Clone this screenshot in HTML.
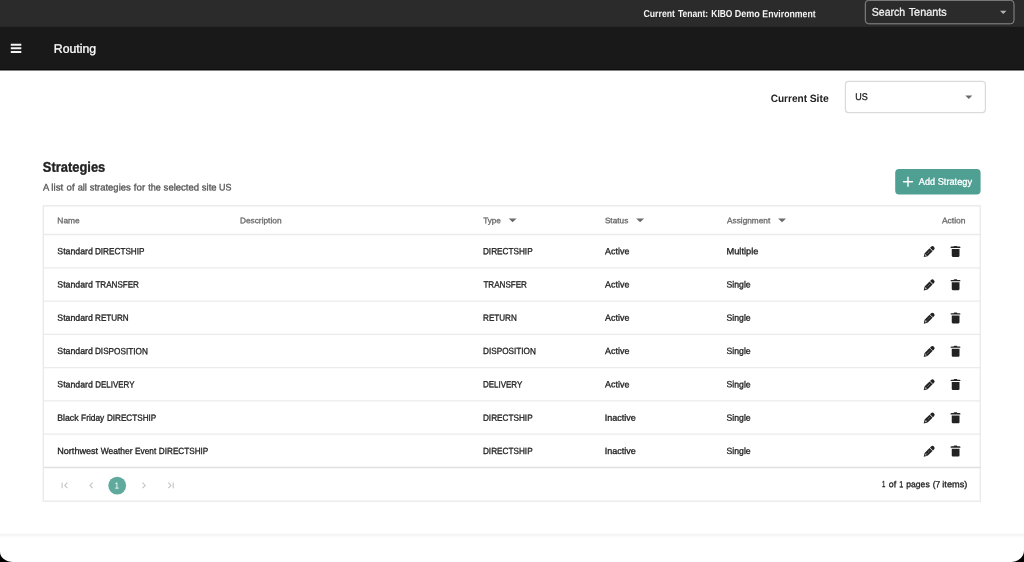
<!DOCTYPE html>
<html lang="en">
<head>
<meta charset="utf-8">
<title>Routing</title>
<style>
*{box-sizing:border-box;margin:0;padding:0}
html,body{width:1024px;height:562px;overflow:hidden;background:#000;font-family:"Liberation Sans",sans-serif;}
#app{will-change:transform;position:absolute;left:0;top:0;width:1024px;height:562px;background:#fff;overflow:hidden}
.abs{position:absolute;white-space:nowrap;line-height:1}
#topbar{position:absolute;left:0;top:0;width:1024px;height:27px;background:#2b2b2b}
.tx{left:0;top:0;transform-origin:0 0}
.w{display:inline-block;width:0;transform-origin:0 0;white-space:nowrap}
</style>
</head>
<body>
<div id="app">
  <div id="topbar"></div>
  <svg class="abs" style="left:0;top:0" width="1024" height="562" viewBox="0 0 1024 562" fill="none">
    <rect x="0" y="26.8" width="1024" height="43.5" fill="#191919"/>
    <rect x="0" y="69" width="1024" height="1.3" fill="#0d0d0d"/>
    <rect x="865.3" y="0.3" width="148.7" height="23.5" rx="3.5" stroke="#8c8c8c" stroke-width="1"/>
    <path d="M10.8 43.8h10.5v2h-10.5zM10.8 47.3h10.5v2h-10.5zM10.8 50.9h10.5v2.1h-10.5z" fill="#f4f4f4"/>
    <rect x="845.4" y="81.4" width="140" height="31.2" rx="3" stroke="#dadada" stroke-width="1.2" fill="#fff"/>
    <rect x="895.2" y="169.1" width="85.4" height="25.5" rx="4" fill="#4f9f93"/>
    <path d="M908 177.3v9M903.5 181.8h9" stroke="#fff" stroke-width="1.4" stroke-linecap="round"/>
    <circle cx="117.2" cy="485.6" r="8.9" fill="#5fa99d"/>
  </svg>

<svg class="abs" style="left:0;top:0" width="1024" height="562" viewBox="0 0 1024 562" fill="none">
<rect x="43.3" y="205.8" width="937" height="295.4" stroke="#e9e9e9" stroke-width="1.3"/>
<path d="M44 234.5H980" stroke="#ebebeb" stroke-width="1.3"/>
<path d="M44 267.78H980" stroke="#ebebeb" stroke-width="1.3"/>
<path d="M44 301.06H980" stroke="#ebebeb" stroke-width="1.3"/>
<path d="M44 334.34H980" stroke="#ebebeb" stroke-width="1.3"/>
<path d="M44 367.62H980" stroke="#ebebeb" stroke-width="1.3"/>
<path d="M44 400.9H980" stroke="#ebebeb" stroke-width="1.3"/>
<path d="M44 434.18H980" stroke="#ebebeb" stroke-width="1.3"/>
<path d="M44 467.5H980" stroke="#dfdfdf" stroke-width="1.7"/>
<path d="M508.7 218.4h7.9l-3.95 3.9z" fill="#6a6a6a"/>
<path d="M636.2 218.4h7.9l-3.95 3.9z" fill="#6a6a6a"/>
<path d="M778.1 218.4h7.9l-3.95 3.9z" fill="#6a6a6a"/>
<path d="M1000 10.7h6.5l-3.25 3.3z" fill="#b4b4b4"/>
<path d="M965.3 95.6h7l-3.5 3.4z" fill="#6a6a6a"/>
<g transform="translate(922,243.80)"><g transform="translate(1.7,13.3) rotate(-45)" fill="#222"><path d="M0 0L3.4 -2.1V2.1Z"/><path d="M3.4 -2.1H10.4V2.1H3.4Z"/><path d="M11 -2.1H12.5Q14.5 -2.1 14.5 0Q14.5 2.1 12.5 2.1H11Z"/><path d="M1.7 0L3.3 -1V1Z" fill="#bbb"/><path d="M4.3 0H9.6" stroke="#ccc" stroke-width="0.6" stroke-dasharray="1 0.8" fill="none"/></g></g>
<path transform="translate(949,243.80)" d="M1.6 3.6Q1.6 2.8 2.5 2.8H4.6Q4.9 2.1 5.6 2.1H7.4Q8.1 2.1 8.4 2.8H10.5Q11.4 2.8 11.4 3.6V4.2H1.6Z M2.75 5.2H10.5V12Q10.5 13.1 9.4 13.1H3.85Q2.75 13.1 2.75 12Z" fill="#222"/>
<g transform="translate(922,277.08)"><g transform="translate(1.7,13.3) rotate(-45)" fill="#222"><path d="M0 0L3.4 -2.1V2.1Z"/><path d="M3.4 -2.1H10.4V2.1H3.4Z"/><path d="M11 -2.1H12.5Q14.5 -2.1 14.5 0Q14.5 2.1 12.5 2.1H11Z"/><path d="M1.7 0L3.3 -1V1Z" fill="#bbb"/><path d="M4.3 0H9.6" stroke="#ccc" stroke-width="0.6" stroke-dasharray="1 0.8" fill="none"/></g></g>
<path transform="translate(949,277.08)" d="M1.6 3.6Q1.6 2.8 2.5 2.8H4.6Q4.9 2.1 5.6 2.1H7.4Q8.1 2.1 8.4 2.8H10.5Q11.4 2.8 11.4 3.6V4.2H1.6Z M2.75 5.2H10.5V12Q10.5 13.1 9.4 13.1H3.85Q2.75 13.1 2.75 12Z" fill="#222"/>
<g transform="translate(922,310.36)"><g transform="translate(1.7,13.3) rotate(-45)" fill="#222"><path d="M0 0L3.4 -2.1V2.1Z"/><path d="M3.4 -2.1H10.4V2.1H3.4Z"/><path d="M11 -2.1H12.5Q14.5 -2.1 14.5 0Q14.5 2.1 12.5 2.1H11Z"/><path d="M1.7 0L3.3 -1V1Z" fill="#bbb"/><path d="M4.3 0H9.6" stroke="#ccc" stroke-width="0.6" stroke-dasharray="1 0.8" fill="none"/></g></g>
<path transform="translate(949,310.36)" d="M1.6 3.6Q1.6 2.8 2.5 2.8H4.6Q4.9 2.1 5.6 2.1H7.4Q8.1 2.1 8.4 2.8H10.5Q11.4 2.8 11.4 3.6V4.2H1.6Z M2.75 5.2H10.5V12Q10.5 13.1 9.4 13.1H3.85Q2.75 13.1 2.75 12Z" fill="#222"/>
<g transform="translate(922,343.64)"><g transform="translate(1.7,13.3) rotate(-45)" fill="#222"><path d="M0 0L3.4 -2.1V2.1Z"/><path d="M3.4 -2.1H10.4V2.1H3.4Z"/><path d="M11 -2.1H12.5Q14.5 -2.1 14.5 0Q14.5 2.1 12.5 2.1H11Z"/><path d="M1.7 0L3.3 -1V1Z" fill="#bbb"/><path d="M4.3 0H9.6" stroke="#ccc" stroke-width="0.6" stroke-dasharray="1 0.8" fill="none"/></g></g>
<path transform="translate(949,343.64)" d="M1.6 3.6Q1.6 2.8 2.5 2.8H4.6Q4.9 2.1 5.6 2.1H7.4Q8.1 2.1 8.4 2.8H10.5Q11.4 2.8 11.4 3.6V4.2H1.6Z M2.75 5.2H10.5V12Q10.5 13.1 9.4 13.1H3.85Q2.75 13.1 2.75 12Z" fill="#222"/>
<g transform="translate(922,376.92)"><g transform="translate(1.7,13.3) rotate(-45)" fill="#222"><path d="M0 0L3.4 -2.1V2.1Z"/><path d="M3.4 -2.1H10.4V2.1H3.4Z"/><path d="M11 -2.1H12.5Q14.5 -2.1 14.5 0Q14.5 2.1 12.5 2.1H11Z"/><path d="M1.7 0L3.3 -1V1Z" fill="#bbb"/><path d="M4.3 0H9.6" stroke="#ccc" stroke-width="0.6" stroke-dasharray="1 0.8" fill="none"/></g></g>
<path transform="translate(949,376.92)" d="M1.6 3.6Q1.6 2.8 2.5 2.8H4.6Q4.9 2.1 5.6 2.1H7.4Q8.1 2.1 8.4 2.8H10.5Q11.4 2.8 11.4 3.6V4.2H1.6Z M2.75 5.2H10.5V12Q10.5 13.1 9.4 13.1H3.85Q2.75 13.1 2.75 12Z" fill="#222"/>
<g transform="translate(922,410.20)"><g transform="translate(1.7,13.3) rotate(-45)" fill="#222"><path d="M0 0L3.4 -2.1V2.1Z"/><path d="M3.4 -2.1H10.4V2.1H3.4Z"/><path d="M11 -2.1H12.5Q14.5 -2.1 14.5 0Q14.5 2.1 12.5 2.1H11Z"/><path d="M1.7 0L3.3 -1V1Z" fill="#bbb"/><path d="M4.3 0H9.6" stroke="#ccc" stroke-width="0.6" stroke-dasharray="1 0.8" fill="none"/></g></g>
<path transform="translate(949,410.20)" d="M1.6 3.6Q1.6 2.8 2.5 2.8H4.6Q4.9 2.1 5.6 2.1H7.4Q8.1 2.1 8.4 2.8H10.5Q11.4 2.8 11.4 3.6V4.2H1.6Z M2.75 5.2H10.5V12Q10.5 13.1 9.4 13.1H3.85Q2.75 13.1 2.75 12Z" fill="#222"/>
<g transform="translate(922,443.48)"><g transform="translate(1.7,13.3) rotate(-45)" fill="#222"><path d="M0 0L3.4 -2.1V2.1Z"/><path d="M3.4 -2.1H10.4V2.1H3.4Z"/><path d="M11 -2.1H12.5Q14.5 -2.1 14.5 0Q14.5 2.1 12.5 2.1H11Z"/><path d="M1.7 0L3.3 -1V1Z" fill="#bbb"/><path d="M4.3 0H9.6" stroke="#ccc" stroke-width="0.6" stroke-dasharray="1 0.8" fill="none"/></g></g>
<path transform="translate(949,443.48)" d="M1.6 3.6Q1.6 2.8 2.5 2.8H4.6Q4.9 2.1 5.6 2.1H7.4Q8.1 2.1 8.4 2.8H10.5Q11.4 2.8 11.4 3.6V4.2H1.6Z M2.75 5.2H10.5V12Q10.5 13.1 9.4 13.1H3.85Q2.75 13.1 2.75 12Z" fill="#222"/>
</svg>
<div class="abs tx" style="font-size:10.1px;font-weight:bold;color:#f4f4f4;transform:translate(643.47px,9.05px) rotate(0.04deg)"><span class="w" style="transform:translateX(0.00px) scaleX(0.8655)">Current</span> <span class="w" style="transform:translateX(31.42px) scaleX(0.8495)">Tenant:</span> <span class="w" style="transform:translateX(61.85px) scaleX(0.8356)">KIBO</span> <span class="w" style="transform:translateX(83.27px) scaleX(0.8921)">Demo</span> <span class="w" style="transform:translateX(107.89px) scaleX(0.8646)">Environment</span></div>
<div class="abs tx" style="font-size:11.2px;font-weight:normal;color:#f0f0f0;-webkit-text-stroke:0.3px #f0f0f0;transform:translate(871.86px,6.65px) rotate(0.04deg)"><span class="w" style="transform:translateX(0.00px) scaleX(0.9405)">Search</span> <span class="w" style="transform:translateX(33.82px) scaleX(0.9693)">Tenants</span></div>
<div class="abs tx" style="font-size:12.3px;font-weight:normal;color:#fff;-webkit-text-stroke:0.3px #fff;transform:translate(53.83px,42.75px) scaleX(0.9967) rotate(0.04deg)">Routing</div>
<div class="abs tx" style="font-size:10.6px;font-weight:bold;color:#222;transform:translate(770.67px,93.05px) rotate(0.04deg)"><span class="w" style="transform:translateX(0.00px) scaleX(0.9500)">Current</span> <span class="w" style="transform:translateX(35.99px) scaleX(0.9784)">Site</span></div>
<div class="abs tx" style="font-size:9.7px;font-weight:normal;color:#222;-webkit-text-stroke:0.3px #222;transform:translate(855.35px,91.90px) scaleX(0.9253) rotate(0.04deg)">US</div>
<div class="abs tx" style="font-size:14px;font-weight:bold;color:#222;-webkit-text-stroke:0.35px #222;transform:translate(42.85px,159.75px) scaleX(0.9222) rotate(0.04deg)">Strategies</div>
<div class="abs tx" style="font-size:9.5px;font-weight:normal;color:#555;-webkit-text-stroke:0.3px #555;transform:translate(42.94px,182.40px) rotate(0.04deg)"><span class="w" style="transform:translateX(0.00px) scaleX(0.9873)">A</span> <span class="w" style="transform:translateX(5.36px) scaleX(1.0341)">list</span> <span class="w" style="transform:translateX(18.68px) scaleX(1.0013)">of</span> <span class="w" style="transform:translateX(26.71px) scaleX(0.9735)">all</span> <span class="w" style="transform:translateX(35.75px) scaleX(0.9967)">strategies</span> <span class="w" style="transform:translateX(77.93px) scaleX(1.0195)">for</span> <span class="w" style="transform:translateX(89.39px) scaleX(0.9509)">the</span> <span class="w" style="transform:translateX(102.68px) scaleX(1.0033)">selected</span> <span class="w" style="transform:translateX(137.89px) scaleX(0.9987)">site</span> <span class="w" style="transform:translateX(152.14px) scaleX(0.9384)">US</span></div>
<div class="abs tx" style="font-size:9.6px;font-weight:normal;color:#fff;-webkit-text-stroke:0.3px #fff;transform:translate(918.85px,176.85px) rotate(0.04deg)"><span class="w" style="transform:translateX(0.00px) scaleX(0.9435)">Add</span> <span class="w" style="transform:translateX(15.82px) scaleX(0.9621)">Strategy</span></div>
<div class="abs tx" style="font-size:8px;font-weight:normal;color:#6a6a6a;-webkit-text-stroke:0.3px #6a6a6a;transform:translate(57.37px,217.15px) scaleX(1.0467) rotate(0.04deg)">Name</div>
<div class="abs tx" style="font-size:8px;font-weight:normal;color:#6a6a6a;-webkit-text-stroke:0.3px #6a6a6a;transform:translate(239.92px,217.15px) scaleX(1.0394) rotate(0.04deg)">Description</div>
<div class="abs tx" style="font-size:8px;font-weight:normal;color:#6a6a6a;-webkit-text-stroke:0.3px #6a6a6a;transform:translate(483.15px,217.15px) scaleX(1.0177) rotate(0.04deg)">Type</div>
<div class="abs tx" style="font-size:8px;font-weight:normal;color:#6a6a6a;-webkit-text-stroke:0.3px #6a6a6a;transform:translate(604.88px,217.15px) scaleX(1.0306) rotate(0.04deg)">Status</div>
<div class="abs tx" style="font-size:8px;font-weight:normal;color:#6a6a6a;-webkit-text-stroke:0.3px #6a6a6a;transform:translate(727.10px,217.15px) scaleX(1.0310) rotate(0.04deg)">Assignment</div>
<div class="abs tx" style="font-size:8px;font-weight:normal;color:#6a6a6a;-webkit-text-stroke:0.3px #6a6a6a;transform:translate(941.97px,217.15px) scaleX(1.0569) rotate(0.04deg)">Action</div>
<div class="abs tx" style="font-size:9px;font-weight:normal;color:#222;-webkit-text-stroke:0.3px #222;transform:translate(57.33px,247.25px) rotate(0.04deg)"><span class="w" style="transform:translateX(0.00px) scaleX(0.9716)">Standard</span> <span class="w" style="transform:translateX(34.60px) scaleX(0.9090)">DIRECTSHIP</span></div>
<div class="abs tx" style="font-size:9px;font-weight:normal;color:#222;-webkit-text-stroke:0.3px #222;transform:translate(482.93px,247.25px) scaleX(0.9113) rotate(0.04deg)">DIRECTSHIP</div>
<div class="abs tx" style="font-size:9px;font-weight:normal;color:#222;-webkit-text-stroke:0.3px #222;transform:translate(605.12px,247.25px) scaleX(0.9888) rotate(0.04deg)">Active</div>
<div class="abs tx" style="font-size:9px;font-weight:normal;color:#222;-webkit-text-stroke:0.3px #222;transform:translate(726.43px,247.25px) scaleX(1.0322) rotate(0.04deg)">Multiple</div>
<div class="abs tx" style="font-size:9px;font-weight:normal;color:#222;-webkit-text-stroke:0.3px #222;transform:translate(57.33px,280.53px) rotate(0.04deg)"><span class="w" style="transform:translateX(0.00px) scaleX(0.9716)">Standard</span> <span class="w" style="transform:translateX(35.08px) scaleX(0.8968)">TRANSFER</span></div>
<div class="abs tx" style="font-size:9px;font-weight:normal;color:#222;-webkit-text-stroke:0.3px #222;transform:translate(483.39px,280.53px) scaleX(0.8979) rotate(0.04deg)">TRANSFER</div>
<div class="abs tx" style="font-size:9px;font-weight:normal;color:#222;-webkit-text-stroke:0.3px #222;transform:translate(605.12px,280.53px) scaleX(0.9888) rotate(0.04deg)">Active</div>
<div class="abs tx" style="font-size:9px;font-weight:normal;color:#222;-webkit-text-stroke:0.3px #222;transform:translate(726.61px,280.53px) scaleX(0.9608) rotate(0.04deg)">Single</div>
<div class="abs tx" style="font-size:9px;font-weight:normal;color:#222;-webkit-text-stroke:0.3px #222;transform:translate(57.33px,313.81px) rotate(0.04deg)"><span class="w" style="transform:translateX(0.00px) scaleX(0.9716)">Standard</span> <span class="w" style="transform:translateX(34.72px) scaleX(0.8973)">RETURN</span></div>
<div class="abs tx" style="font-size:9px;font-weight:normal;color:#222;-webkit-text-stroke:0.3px #222;transform:translate(483.11px,313.81px) scaleX(0.8973) rotate(0.04deg)">RETURN</div>
<div class="abs tx" style="font-size:9px;font-weight:normal;color:#222;-webkit-text-stroke:0.3px #222;transform:translate(605.12px,313.81px) scaleX(0.9888) rotate(0.04deg)">Active</div>
<div class="abs tx" style="font-size:9px;font-weight:normal;color:#222;-webkit-text-stroke:0.3px #222;transform:translate(726.61px,313.81px) scaleX(0.9608) rotate(0.04deg)">Single</div>
<div class="abs tx" style="font-size:9px;font-weight:normal;color:#222;-webkit-text-stroke:0.3px #222;transform:translate(57.33px,347.09px) rotate(0.04deg)"><span class="w" style="transform:translateX(0.00px) scaleX(0.9716)">Standard</span> <span class="w" style="transform:translateX(34.60px) scaleX(0.9118)">DISPOSITION</span></div>
<div class="abs tx" style="font-size:9px;font-weight:normal;color:#222;-webkit-text-stroke:0.3px #222;transform:translate(483.05px,347.09px) scaleX(0.9115) rotate(0.04deg)">DISPOSITION</div>
<div class="abs tx" style="font-size:9px;font-weight:normal;color:#222;-webkit-text-stroke:0.3px #222;transform:translate(605.12px,347.09px) scaleX(0.9888) rotate(0.04deg)">Active</div>
<div class="abs tx" style="font-size:9px;font-weight:normal;color:#222;-webkit-text-stroke:0.3px #222;transform:translate(726.61px,347.09px) scaleX(0.9608) rotate(0.04deg)">Single</div>
<div class="abs tx" style="font-size:9px;font-weight:normal;color:#222;-webkit-text-stroke:0.3px #222;transform:translate(57.33px,380.37px) rotate(0.04deg)"><span class="w" style="transform:translateX(0.00px) scaleX(0.9716)">Standard</span> <span class="w" style="transform:translateX(34.97px) scaleX(0.8837)">DELIVERY</span></div>
<div class="abs tx" style="font-size:9px;font-weight:normal;color:#222;-webkit-text-stroke:0.3px #222;transform:translate(482.89px,380.37px) scaleX(0.8870) rotate(0.04deg)">DELIVERY</div>
<div class="abs tx" style="font-size:9px;font-weight:normal;color:#222;-webkit-text-stroke:0.3px #222;transform:translate(605.12px,380.37px) scaleX(0.9888) rotate(0.04deg)">Active</div>
<div class="abs tx" style="font-size:9px;font-weight:normal;color:#222;-webkit-text-stroke:0.3px #222;transform:translate(726.61px,380.37px) scaleX(0.9608) rotate(0.04deg)">Single</div>
<div class="abs tx" style="font-size:9px;font-weight:normal;color:#222;-webkit-text-stroke:0.3px #222;transform:translate(57.28px,413.65px) rotate(0.04deg)"><span class="w" style="transform:translateX(0.00px) scaleX(0.9656)">Black</span> <span class="w" style="transform:translateX(20.79px) scaleX(0.9278)">Friday</span> <span class="w" style="transform:translateX(44.60px) scaleX(0.9065)">DIRECTSHIP</span></div>
<div class="abs tx" style="font-size:9px;font-weight:normal;color:#222;-webkit-text-stroke:0.3px #222;transform:translate(482.93px,413.65px) scaleX(0.9113) rotate(0.04deg)">DIRECTSHIP</div>
<div class="abs tx" style="font-size:9px;font-weight:normal;color:#222;-webkit-text-stroke:0.3px #222;transform:translate(604.76px,413.65px) scaleX(1.0034) rotate(0.04deg)">Inactive</div>
<div class="abs tx" style="font-size:9px;font-weight:normal;color:#222;-webkit-text-stroke:0.3px #222;transform:translate(726.61px,413.65px) scaleX(0.9608) rotate(0.04deg)">Single</div>
<div class="abs tx" style="font-size:9px;font-weight:normal;color:#222;-webkit-text-stroke:0.3px #222;transform:translate(57.22px,446.93px) rotate(0.04deg)"><span class="w" style="transform:translateX(0.00px) scaleX(1.0102)">Northwest</span> <span class="w" style="transform:translateX(40.47px) scaleX(0.9388)">Weather</span> <span class="w" style="transform:translateX(72.82px) scaleX(0.9203)">Event</span> <span class="w" style="transform:translateX(93.61px) scaleX(0.9076)">DIRECTSHIP</span></div>
<div class="abs tx" style="font-size:9px;font-weight:normal;color:#222;-webkit-text-stroke:0.3px #222;transform:translate(482.93px,446.93px) scaleX(0.9113) rotate(0.04deg)">DIRECTSHIP</div>
<div class="abs tx" style="font-size:9px;font-weight:normal;color:#222;-webkit-text-stroke:0.3px #222;transform:translate(604.76px,446.93px) scaleX(1.0034) rotate(0.04deg)">Inactive</div>
<div class="abs tx" style="font-size:9px;font-weight:normal;color:#222;-webkit-text-stroke:0.3px #222;transform:translate(726.61px,446.93px) scaleX(0.9608) rotate(0.04deg)">Single</div>
<div class="abs tx" style="font-size:8.8px;font-weight:normal;color:#222;-webkit-text-stroke:0.3px #222;transform:translate(882.08px,480.25px) rotate(0.04deg)"><span class="w" style="transform:translateX(0.00px) scaleX(0.6865)">1</span> <span class="w" style="transform:translateX(4.77px) scaleX(0.9979)">of</span> <span class="w" style="transform:translateX(12.08px) scaleX(0.8153)">1</span> <span class="w" style="transform:translateX(17.20px) scaleX(0.9765)">pages</span> <span class="w" style="transform:translateX(40.65px) scaleX(0.9584)">(7</span> <span class="w" style="transform:translateX(48.23px) scaleX(1.0493)">items)</span></div>
<div class="abs tx" style="font-size:8.6px;font-weight:normal;color:#fff;transform:translate(114.61px,481.45px) scaleX(0.9609) rotate(0.04deg)">1</div>
  <svg class="abs" style="left:55px;top:475px" width="130" height="20" viewBox="55 475 130 20" fill="none" stroke="#c4c4c4" stroke-width="1.1"><path d="M62.1 482.5v5.8M67.4 482.7L64.7 485.4l2.7 2.7"/><path d="M92.7 482.7L90 485.4l2.7 2.7"/><path d="M142.5 482.7L145.2 485.4l-2.7 2.7"/><path d="M173.2 482.5v5.8M168.3 482.7L171 485.4l-2.7 2.7"/></svg>
  <svg class="abs" style="left:0;top:530px" width="1024" height="32" viewBox="0 530 1024 32"><rect x="0" y="533.6" width="1024" height="2.4" fill="#f6f6f6"/><rect x="0" y="536" width="1024" height="1.6" fill="#fbfbfb"/><path d="M0 551.8A13 10.2 0 0 0 13 562H0Z" fill="#000"/><path d="M1024 550.2A12.5 11.8 0 0 1 1011.5 562H1024Z" fill="#000"/></svg>

</div>
</body>
</html>
